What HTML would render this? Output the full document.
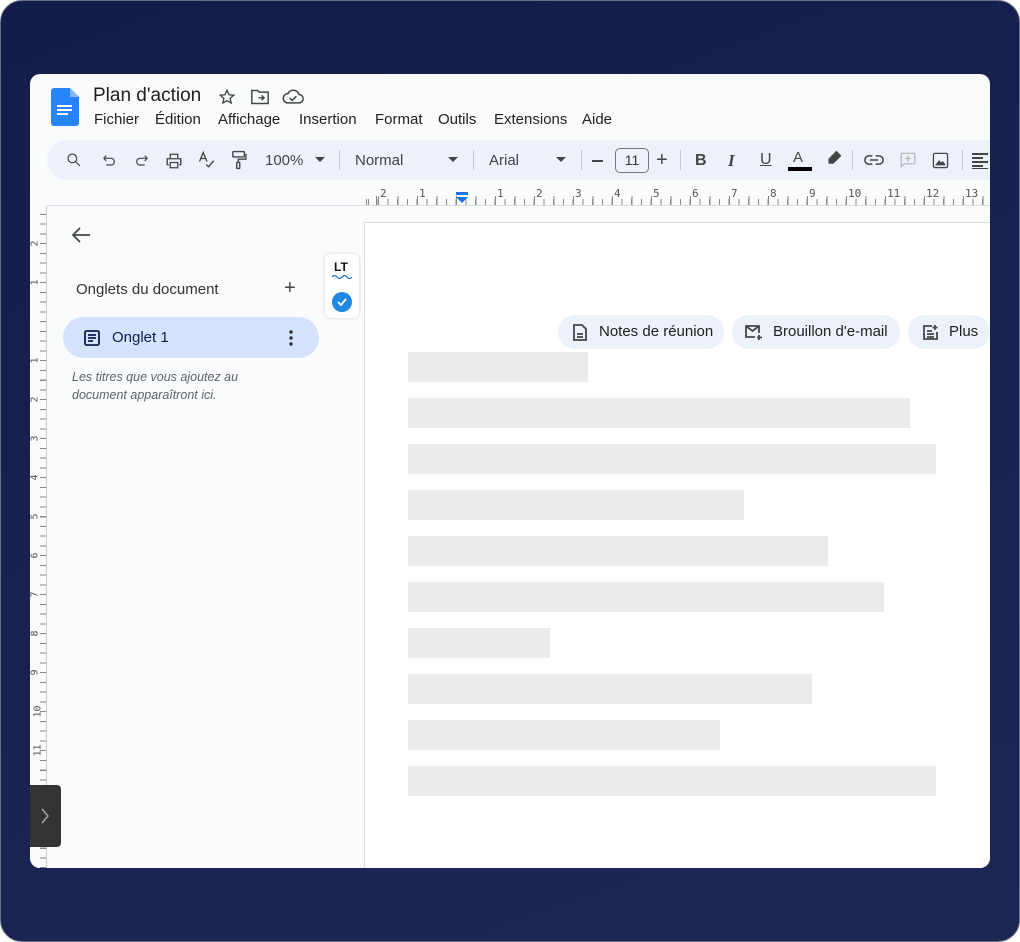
<!DOCTYPE html>
<html><head><meta charset="utf-8"><style>
*{margin:0;padding:0;box-sizing:border-box}
body{width:1020px;height:942px;overflow:hidden;background:#fff;font-family:"Liberation Sans",Arial,sans-serif}
.outer{position:absolute;left:0;top:0;width:1020px;height:942px;border-radius:22px;background:linear-gradient(160deg,#121d4a,#1b2755);border:1px solid #6a6f80}
.panel{position:absolute;left:30px;top:74px;width:960px;height:794px;background:#f9fbfd;border-radius:10px;overflow:hidden}
.abs{position:absolute}
.t{position:absolute;color:#1f1f1f;white-space:nowrap}
.menu span{margin-right:0}
.tb{position:absolute;left:17px;top:66px;width:960px;height:40px;background:#edf2fa;border-radius:20px}
.ic{position:absolute;stroke:#444746;fill:none;stroke-width:1.8}
.bar{position:absolute;left:378px;height:30px;background:#ebebeb}
.chip{position:absolute;top:241px;height:34px;background:#edf2fa;border-radius:17px;font-size:15px;color:#1f1f1f;line-height:34px}
.sep{position:absolute;top:76px;width:1px;height:20px;background:#c7c7c7}
</style></head><body>
<div class="outer"></div>
<div class="panel">
  <!-- doc icon -->
  <svg class="abs" style="left:21px;top:14px" width="28" height="38" viewBox="0 0 28 38"><path d="M3 0h16l9 9v26a3 3 0 0 1-3 3H3a3 3 0 0 1-3-3V3a3 3 0 0 1 3-3z" fill="#2684fc"/><path d="M19 0l9 9h-9z" fill="#8ab4f8"/><rect x="6" y="17" width="15" height="2" fill="#fff"/><rect x="6" y="21" width="15" height="2" fill="#fff"/><rect x="6" y="25" width="11" height="2" fill="#fff"/></svg>
  <div class="t" style="left:63px;top:11px;font-size:19px">Plan d'action</div>
  <svg class="ic" style="left:188px;top:14px" width="18" height="18" viewBox="0 0 24 24" stroke-width="2"><path d="M12 3l2.7 6 6.3.6-4.8 4.2 1.4 6.2L12 16.8 6.4 20l1.4-6.2L3 9.6l6.3-.6z"/></svg>
  <svg class="ic" style="left:220px;top:14px" width="20" height="18" viewBox="0 0 24 22" stroke-width="2"><path d="M2 3h7l2 2h11v14H2z"/><path d="M10 12h7M14 9l3 3-3 3"/></svg>
  <svg class="ic" style="left:252px;top:14px" width="22" height="18" viewBox="0 0 26 20" stroke-width="2"><path d="M7 17h13a5 5 0 0 0 0-10 7 7 0 0 0-13-1 5.5 5.5 0 0 0 0 11z"/><path d="M9 11l3 3 5-5"/></svg>
  <div class="t menu" style="left:64px;top:37px;font-size:15px;word-spacing:0">Fichier</div>
  <div class="t" style="left:125px;top:37px;font-size:15px">Édition</div>
  <div class="t" style="left:188px;top:37px;font-size:15px">Affichage</div>
  <div class="t" style="left:269px;top:37px;font-size:15px">Insertion</div>
  <div class="t" style="left:345px;top:37px;font-size:15px">Format</div>
  <div class="t" style="left:408px;top:37px;font-size:15px">Outils</div>
  <div class="t" style="left:464px;top:37px;font-size:15px">Extensions</div>
  <div class="t" style="left:552px;top:37px;font-size:15px">Aide</div>

  <div class="tb"></div>
  <svg class="ic" style="left:36px;top:78px" width="16" height="16" viewBox="0 0 24 24" stroke-width="2.6"><circle cx="9.5" cy="9.5" r="6.5"/><path d="M14.5 14.5L21 21"/></svg>
  <svg class="ic" style="left:71px;top:79px" width="16" height="16" viewBox="0 0 24 24" stroke-width="2.4"><path d="M4 8h11a5 5 0 0 1 0 10H8M4 8l4-4M4 8l4 4"/></svg>
  <svg class="ic" style="left:104px;top:79px" width="16" height="16" viewBox="0 0 24 24" stroke-width="2.4"><path d="M20 8H9a5 5 0 0 0 0 10h7M20 8l-4-4M20 8l-4 4"/></svg>
  <svg class="ic" style="left:135px;top:78px" width="18" height="18" viewBox="0 0 24 24" stroke-width="2.2"><path d="M7 8V3h10v5M5 17H3V9h18v8h-2M7 14h10v7H7z"/></svg>
  <svg class="ic" style="left:168px;top:76px" width="18" height="20" viewBox="0 0 24 26" stroke-width="2"><path d="M2 15L7 3l5 12M4 11h6M11 19l3 3 7-8"/></svg>
  <svg class="ic" style="left:201px;top:76px" width="16" height="20" viewBox="0 0 20 26" stroke-width="2"><rect x="2" y="2" width="15" height="7" rx="1"/><path d="M17 6h2v6H9v4"/><rect x="7" y="16" width="4" height="8" rx="1"/></svg>
  <div class="t" style="left:235px;top:78px;font-size:15px;color:#444">100%</div>
  <svg class="abs" style="left:285px;top:83px" width="10" height="6"><path d="M0 0h10L5 5z" fill="#444"/></svg>
  <div class="sep" style="left:309px"></div>
  <div class="t" style="left:325px;top:78px;font-size:15px;color:#444">Normal</div>
  <svg class="abs" style="left:418px;top:83px" width="10" height="6"><path d="M0 0h10L5 5z" fill="#444"/></svg>
  <div class="sep" style="left:443px"></div>
  <div class="t" style="left:459px;top:78px;font-size:15px;color:#444">Arial</div>
  <svg class="abs" style="left:526px;top:83px" width="10" height="6"><path d="M0 0h10L5 5z" fill="#444"/></svg>
  <div class="sep" style="left:551px"></div>
  <div class="abs" style="left:562px;top:86px;width:11px;height:2px;background:#444"></div>
  <div class="abs" style="left:585px;top:74px;width:34px;height:25px;border:1.5px solid #747775;border-radius:5px;font-size:14px;text-align:center;line-height:22px;color:#333">11</div>
  <div class="t" style="left:626px;top:75px;font-size:20px;color:#444">+</div>
  <div class="sep" style="left:650px"></div>
  <div class="t" style="left:665px;top:78px;font-size:16px;font-weight:bold;color:#444">B</div>
  <div class="t" style="left:698px;top:77px;font-size:17px;font-style:italic;font-family:'Liberation Serif',serif;font-weight:bold;color:#444">I</div>
  <div class="t" style="left:730px;top:77px;font-size:16px;color:#444;text-decoration:underline">U</div>
  <div class="t" style="left:763px;top:75px;font-size:15px;color:#444">A</div>
  <div class="abs" style="left:758px;top:93px;width:24px;height:4px;background:#000"></div>
  <svg class="ic" style="left:796px;top:76px" width="16" height="18" viewBox="0 0 20 22" stroke-width="2"><path d="M13 2l5 5-9 9H4v-5z" fill="#444"/></svg>
  <div class="sep" style="left:822px"></div>
  <svg class="ic" style="left:834px;top:79px" width="20" height="14" viewBox="0 0 24 14" stroke-width="2.2"><path d="M10 2H6a5 5 0 0 0 0 10h4M14 2h4a5 5 0 0 1 0 10h-4M7 7h10"/></svg>
  <svg class="ic" style="left:869px;top:77px;stroke:#bbb" width="18" height="18" viewBox="0 0 24 24" stroke-width="2"><path d="M3 3h18v14H7l-4 4z"/><path d="M12 6v8M8 10h8"/></svg>
  <svg class="ic" style="left:902px;top:78px" width="17" height="17" viewBox="0 0 24 24" stroke-width="2.2"><rect x="2" y="2" width="20" height="20" rx="2"/><path d="M6 18l4-5 3 3 2-2 3 4z" fill="#444"/></svg>
  <div class="sep" style="left:932px"></div>
  <svg class="abs" style="left:942px;top:79px" width="16" height="16"><path d="M0 1h16M0 5h11M0 9h16M0 13h11M0 16h16" stroke="#444" stroke-width="2"/></svg>

  <!-- horizontal ruler -->
  <div class="abs" style="left:334px;top:131px;width:626px;height:1px;background:#bdbdbd"></div>
  <div class="abs" style="left:334px;top:125px;width:626px;height:6px;background:repeating-linear-gradient(90deg,#888 0 1px,transparent 1px 9.75px);background-position:4px 0"></div>
  <div class="abs" style="left:334px;top:122px;width:626px;height:9px;background:repeating-linear-gradient(90deg,#888 0 1px,transparent 1px 19.5px);background-position:14px 0"></div>
  <div id="rn" style="position:absolute;left:0;top:113px;font-size:11px;color:#555;font-family:'DejaVu Sans Mono',monospace"></div>
  <svg class="abs" style="left:425px;top:118px" width="14" height="12"><rect x="1" y="0" width="12" height="3" fill="#1a73e8"/><path d="M1 5h12l-6 6z" fill="#1a73e8"/></svg>
  <div class="abs" style="left:17px;top:131px;width:943px;height:1px;background:#dadce0"></div>

  <!-- vertical ruler -->
  <div class="abs" style="left:0;top:132px;width:17px;height:662px;background:#f9fbfd"></div>
  <div class="abs" style="left:10px;top:140px;width:6px;height:654px;background:repeating-linear-gradient(180deg,#888 0 1px,transparent 1px 9.75px)"></div>
  <div class="abs" style="left:16px;top:132px;width:1px;height:662px;background:#ccc"></div>
  <div id="vn"></div>

  <!-- sidebar -->
  <svg class="ic" style="left:41px;top:152px" width="20" height="18" viewBox="0 0 20 18" stroke-width="2"><path d="M19 9H2M9 2L2 9l7 7"/></svg>
  <div class="t" style="left:46px;top:207px;font-size:15px;color:#333">Onglets du document</div>
  <div class="t" style="left:254px;top:203px;font-size:20px;color:#444">+</div>
  <div class="abs" style="left:33px;top:243px;width:256px;height:41px;background:#d3e3fd;border-radius:21px"></div>
  <svg class="ic" style="left:54px;top:256px;stroke:#0b1f4b" width="16" height="16" viewBox="0 0 16 16" stroke-width="1.8"><rect x="1" y="1" width="14" height="14" rx="1.5"/><path d="M4 5h8M4 8h8M4 11h5"/></svg>
  <div class="t" style="left:82px;top:255px;font-size:15px;color:#0b1f4b">Onglet 1</div>
  <svg class="abs" style="left:259px;top:256px" width="4" height="16"><circle cx="2" cy="2" r="1.7" fill="#333"/><circle cx="2" cy="8" r="1.7" fill="#333"/><circle cx="2" cy="14" r="1.7" fill="#333"/></svg>
  <div class="t" style="left:42px;top:294px;font-size:12.5px;font-style:italic;color:#5f6368;line-height:18px">Les titres que vous ajoutez au<br>document apparaîtront ici.</div>

  <!-- LT widget -->
  <div class="abs" style="left:295px;top:180px;width:34px;height:64px;background:#fff;border-radius:6px;box-shadow:0 0 3px rgba(0,0,0,.18)"></div>
  <div class="t" style="left:304px;top:186px;font-size:12px;font-weight:bold;color:#111">LT</div>
  <svg class="abs" style="left:302px;top:201px" width="20" height="4"><path d="M0 2q2.5-3 5 0t5 0 5 0 5 0" stroke="#1a73e8" fill="none" stroke-width="1.2"/></svg>
  <div class="abs" style="left:302px;top:218px;width:20px;height:20px;border-radius:50%;background:#1e88e5"></div>
  <svg class="abs" style="left:307px;top:224px" width="10" height="9"><path d="M1 4l3 3 5-6" stroke="#fff" fill="none" stroke-width="1.8"/></svg>

  <!-- page -->
  <div class="abs" style="left:334px;top:148px;width:640px;height:660px;background:#fff;border:1px solid #dadce0"></div>
  <div class="chip" style="left:528px;width:166px"><svg class="ic" style="left:15px;top:9px" width="14" height="17" viewBox="0 0 14 17" stroke-width="1.7"><path d="M1 1h8l4 4v11H1z"/><path d="M4 10h6M4 13h6"/></svg><span style="position:absolute;left:41px">Notes de réunion</span></div>
  <div class="chip" style="left:702px;width:168px"><svg class="ic" style="left:13px;top:10px" width="18" height="15" viewBox="0 0 18 15" stroke-width="1.7"><path d="M14 8V1H1v11h9M1 1l6.5 5L14 1M14 10v5M12 12.5h5"/></svg><span style="position:absolute;left:41px">Brouillon d'e-mail</span></div>
  <div class="chip" style="left:878px;width:82px"><svg class="ic" style="left:14px;top:9px" width="17" height="17" viewBox="0 0 17 17" stroke-width="1.7"><path d="M10 2H2v13h13V8M5 7h5M5 10h7M5 13h7M13 1v5M10.5 3.5h5"/></svg><span style="position:absolute;left:41px">Plus</span></div>

  <div class="bar" style="top:278px;width:180px"></div>
  <div class="bar" style="top:324px;width:502px"></div>
  <div class="bar" style="top:370px;width:528px"></div>
  <div class="bar" style="top:416px;width:336px"></div>
  <div class="bar" style="top:462px;width:420px"></div>
  <div class="bar" style="top:508px;width:476px"></div>
  <div class="bar" style="top:554px;width:142px"></div>
  <div class="bar" style="top:600px;width:404px"></div>
  <div class="bar" style="top:646px;width:312px"></div>
  <div class="bar" style="top:692px;width:528px"></div>

  <!-- collapse tab -->
  <div class="abs" style="left:0;top:711px;width:31px;height:62px;background:#333;border-radius:0 4px 4px 0"></div>
  <svg class="abs" style="left:11px;top:734px" width="8" height="16"><path d="M1 1l6 7-6 7" stroke="#aaa" fill="none" stroke-width="1.4"/></svg>
</div>
<script>
var rn=document.getElementById('rn'),h='';
var labels=[[354,'2'],[393,'1'],[471,'1'],[510,'2']];
for(var i=3;i<=13;i++)labels.push([510+(i-2)*39,String(i)]);
labels.forEach(function(l){h+='<span style="position:absolute;left:'+(l[0]-4)+'px">'+l[1]+'</span>'});
rn.innerHTML=h;
var vn=document.getElementById('vn'),v='';
var vl=[[170,'2'],[209,'1'],[287,'1'],[326,'2']];
for(var j=3;j<=11;j++)vl.push([326+(j-2)*39,String(j)]);
vl.forEach(function(l){v+='<span style="position:absolute;left:2px;top:'+(l[1]-0+0, l[0]-6)+'px;font-size:10px;color:#555;transform:rotate(-90deg);font-family:\'DejaVu Sans Mono\',monospace">'+l[1]+'</span>'});
vn.innerHTML=v;
</script>
</body></html>
